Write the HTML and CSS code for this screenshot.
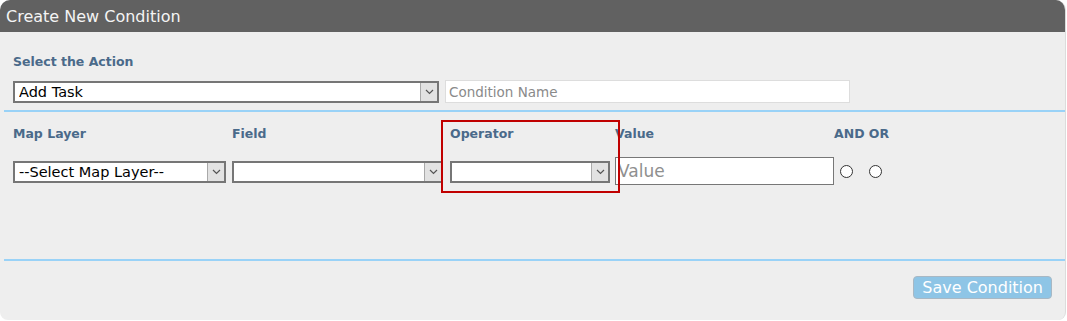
FILE: index.html
```html
<!DOCTYPE html>
<html lang="en">
<head>
  <meta charset="UTF-8" />
  <meta name="viewport" content="width=device-width, initial-scale=1.0" />
  <link rel="stylesheet" href="styles.css">
</head>
<body>

  <div class="panel">
    <div class="panel-head">Create New Condition</div>

    <div class="action-block">
      <label class="lbl">Select the Action</label>
      <div class="action-row">
        <div class="sel sel-action">
          <select name="action">
            <option>Add Task</option>
          </select>
          <span class="arrow"><svg width="9" height="6" viewBox="0 0 9 6"><path d="M1 1 L4.5 4.5 L8 1" fill="none" stroke="#555" stroke-width="1.2"/></svg></span>
        </div>
        <input class="cond-name" placeholder="Condition Name" />
      </div>
    </div>

    <div class="rule-block">
      <div class="col col-layer">
        <label class="lbl">Map Layer</label>
        <div class="sel">
          <select name="layer">
            <option>--Select Map Layer--</option>
          </select>
          <span class="arrow"><svg width="9" height="6" viewBox="0 0 9 6"><path d="M1 1 L4.5 4.5 L8 1" fill="none" stroke="#555" stroke-width="1.2"/></svg></span>
        </div>
      </div>
      <div class="col col-field">
        <label class="lbl">Field</label>
        <div class="sel">
          <select name="field"></select>
          <span class="arrow"><svg width="9" height="6" viewBox="0 0 9 6"><path d="M1 1 L4.5 4.5 L8 1" fill="none" stroke="#555" stroke-width="1.2"/></svg></span>
        </div>
      </div>
      <div class="col col-op">
        <label class="lbl">Operator</label>
        <div class="sel">
          <select name="operator"></select>
          <span class="arrow"><svg width="9" height="6" viewBox="0 0 9 6"><path d="M1 1 L4.5 4.5 L8 1" fill="none" stroke="#555" stroke-width="1.2"/></svg></span>
        </div>
      </div>
      <div class="col col-value">
        <label class="lbl">Value</label>
        <input class="value-input" placeholder="Value" />
      </div>
      <div class="col col-join">
        <label class="lbl">AND OR</label>
        <div class="radios">
          <input type="radio" name="join" value="and" />
          <input type="radio" name="join" value="or" />
        </div>
      </div>
    </div>

    <div class="panel-foot">
      <button type="button" class="btn-save">Save Condition</button>
    </div>
  </div>

</body>
</html>
```

FILE: styles.css
```css
body {
  margin: 0;
  background: #ffffff;
  font-family: "DejaVu Sans", Verdana, sans-serif;
}

.panel {
  width: 1065px;
  background: #eeeeee;
  border-right: 1px solid #dcdcdc;
  border-radius: 10px 10px 8px 8px;
  overflow: hidden;
}

.panel-head {
  height: 32px;
  line-height: 34px;
  background: #616161;
  color: #f4f4f4;
  font-size: 16px;
  padding-left: 6px;
}

.lbl {
  display: block;
  font-size: 12.5px;
  font-weight: bold;
  color: #4a6a8a;
  line-height: 16px;
}

.action-block {
  padding: 22px 0 7px 9px;
  margin-left: 4px;
  border-bottom: 2px solid #99d2f7;
}

.action-row {
  display: flex;
  align-items: center;
  gap: 6px;
  margin-top: 10px;
}

.sel {
  display: flex;
  height: 22px;
  box-sizing: border-box;
  border: 2px solid #767676;
  background: #ffffff;
}

.sel select {
  flex: 1;
  min-width: 0;
  appearance: none;
  -webkit-appearance: none;
  border: none;
  outline: none;
  background: #ffffff;
  font-family: "DejaVu Sans", Verdana, sans-serif;
  font-size: 14.5px;
  color: #000;
  padding: 0 4px;
  margin: 0;
}

.sel .arrow {
  width: 16px;
  background: #e2e2e2;
  border-left: 1px solid #a9a9a9;
  display: flex;
  align-items: center;
  justify-content: center;
}

.sel-action {
  width: 426px;
}

.cond-name {
  width: 405px;
  height: 23px;
  box-sizing: border-box;
  border: 1px solid #dddddd;
  padding: 0 3px;
  font-family: "DejaVu Sans", Verdana, sans-serif;
  font-size: 13.5px;
}
.cond-name::placeholder {
  color: #8a8a8a;
}

.rule-block {
  display: flex;
  margin-left: 4px;
  padding: 14px 0 0 9px;
  height: 133px;
  border-bottom: 2px solid #99d2f7;
}

.col {
  display: flex;
  flex-direction: column;
  gap: 15px;
}

.col .sel {
  margin-top: 4px;
}

.col-layer { width: 219px; }
.col-layer .sel { width: 213px; }
.col-field { width: 218px; }
.col-field .sel { width: 211px; }
.col-op { width: 165px; position: relative; }
.col-op .sel { width: 160px; }
.col-value { width: 219px; }

.col-op::after {
  content: "";
  position: absolute;
  top: -6px;
  left: -9px;
  width: 175px;
  height: 69px;
  border: 2px solid #c00000;
}

.value-input {
  width: 219px;
  height: 28px;
  box-sizing: border-box;
  border: 1px solid #777777;
  padding: 0 2px;
  font-family: "DejaVu Sans", Verdana, sans-serif;
  font-size: 17px;
}
.value-input::placeholder {
  color: #8f8f8f;
}

.radios {
  display: flex;
  gap: 16px;
  padding-left: 6px;
  margin-top: 8px;
}

.radios input {
  appearance: none;
  -webkit-appearance: none;
  width: 13px;
  height: 13px;
  margin: 0;
  border: 1px solid #333;
  border-radius: 50%;
  background: #ffffff;
}

.panel-foot {
  display: flex;
  justify-content: flex-end;
  padding: 15px 13px 21px 0;
}

.btn-save {
  height: 23px;
  padding: 0 8px;
  background: #8ec5e6;
  color: #ffffff;
  border: 1px solid #a8b8c4;
  border-radius: 4px;
  font-family: "DejaVu Sans", Verdana, sans-serif;
  font-size: 16px;
}
```
